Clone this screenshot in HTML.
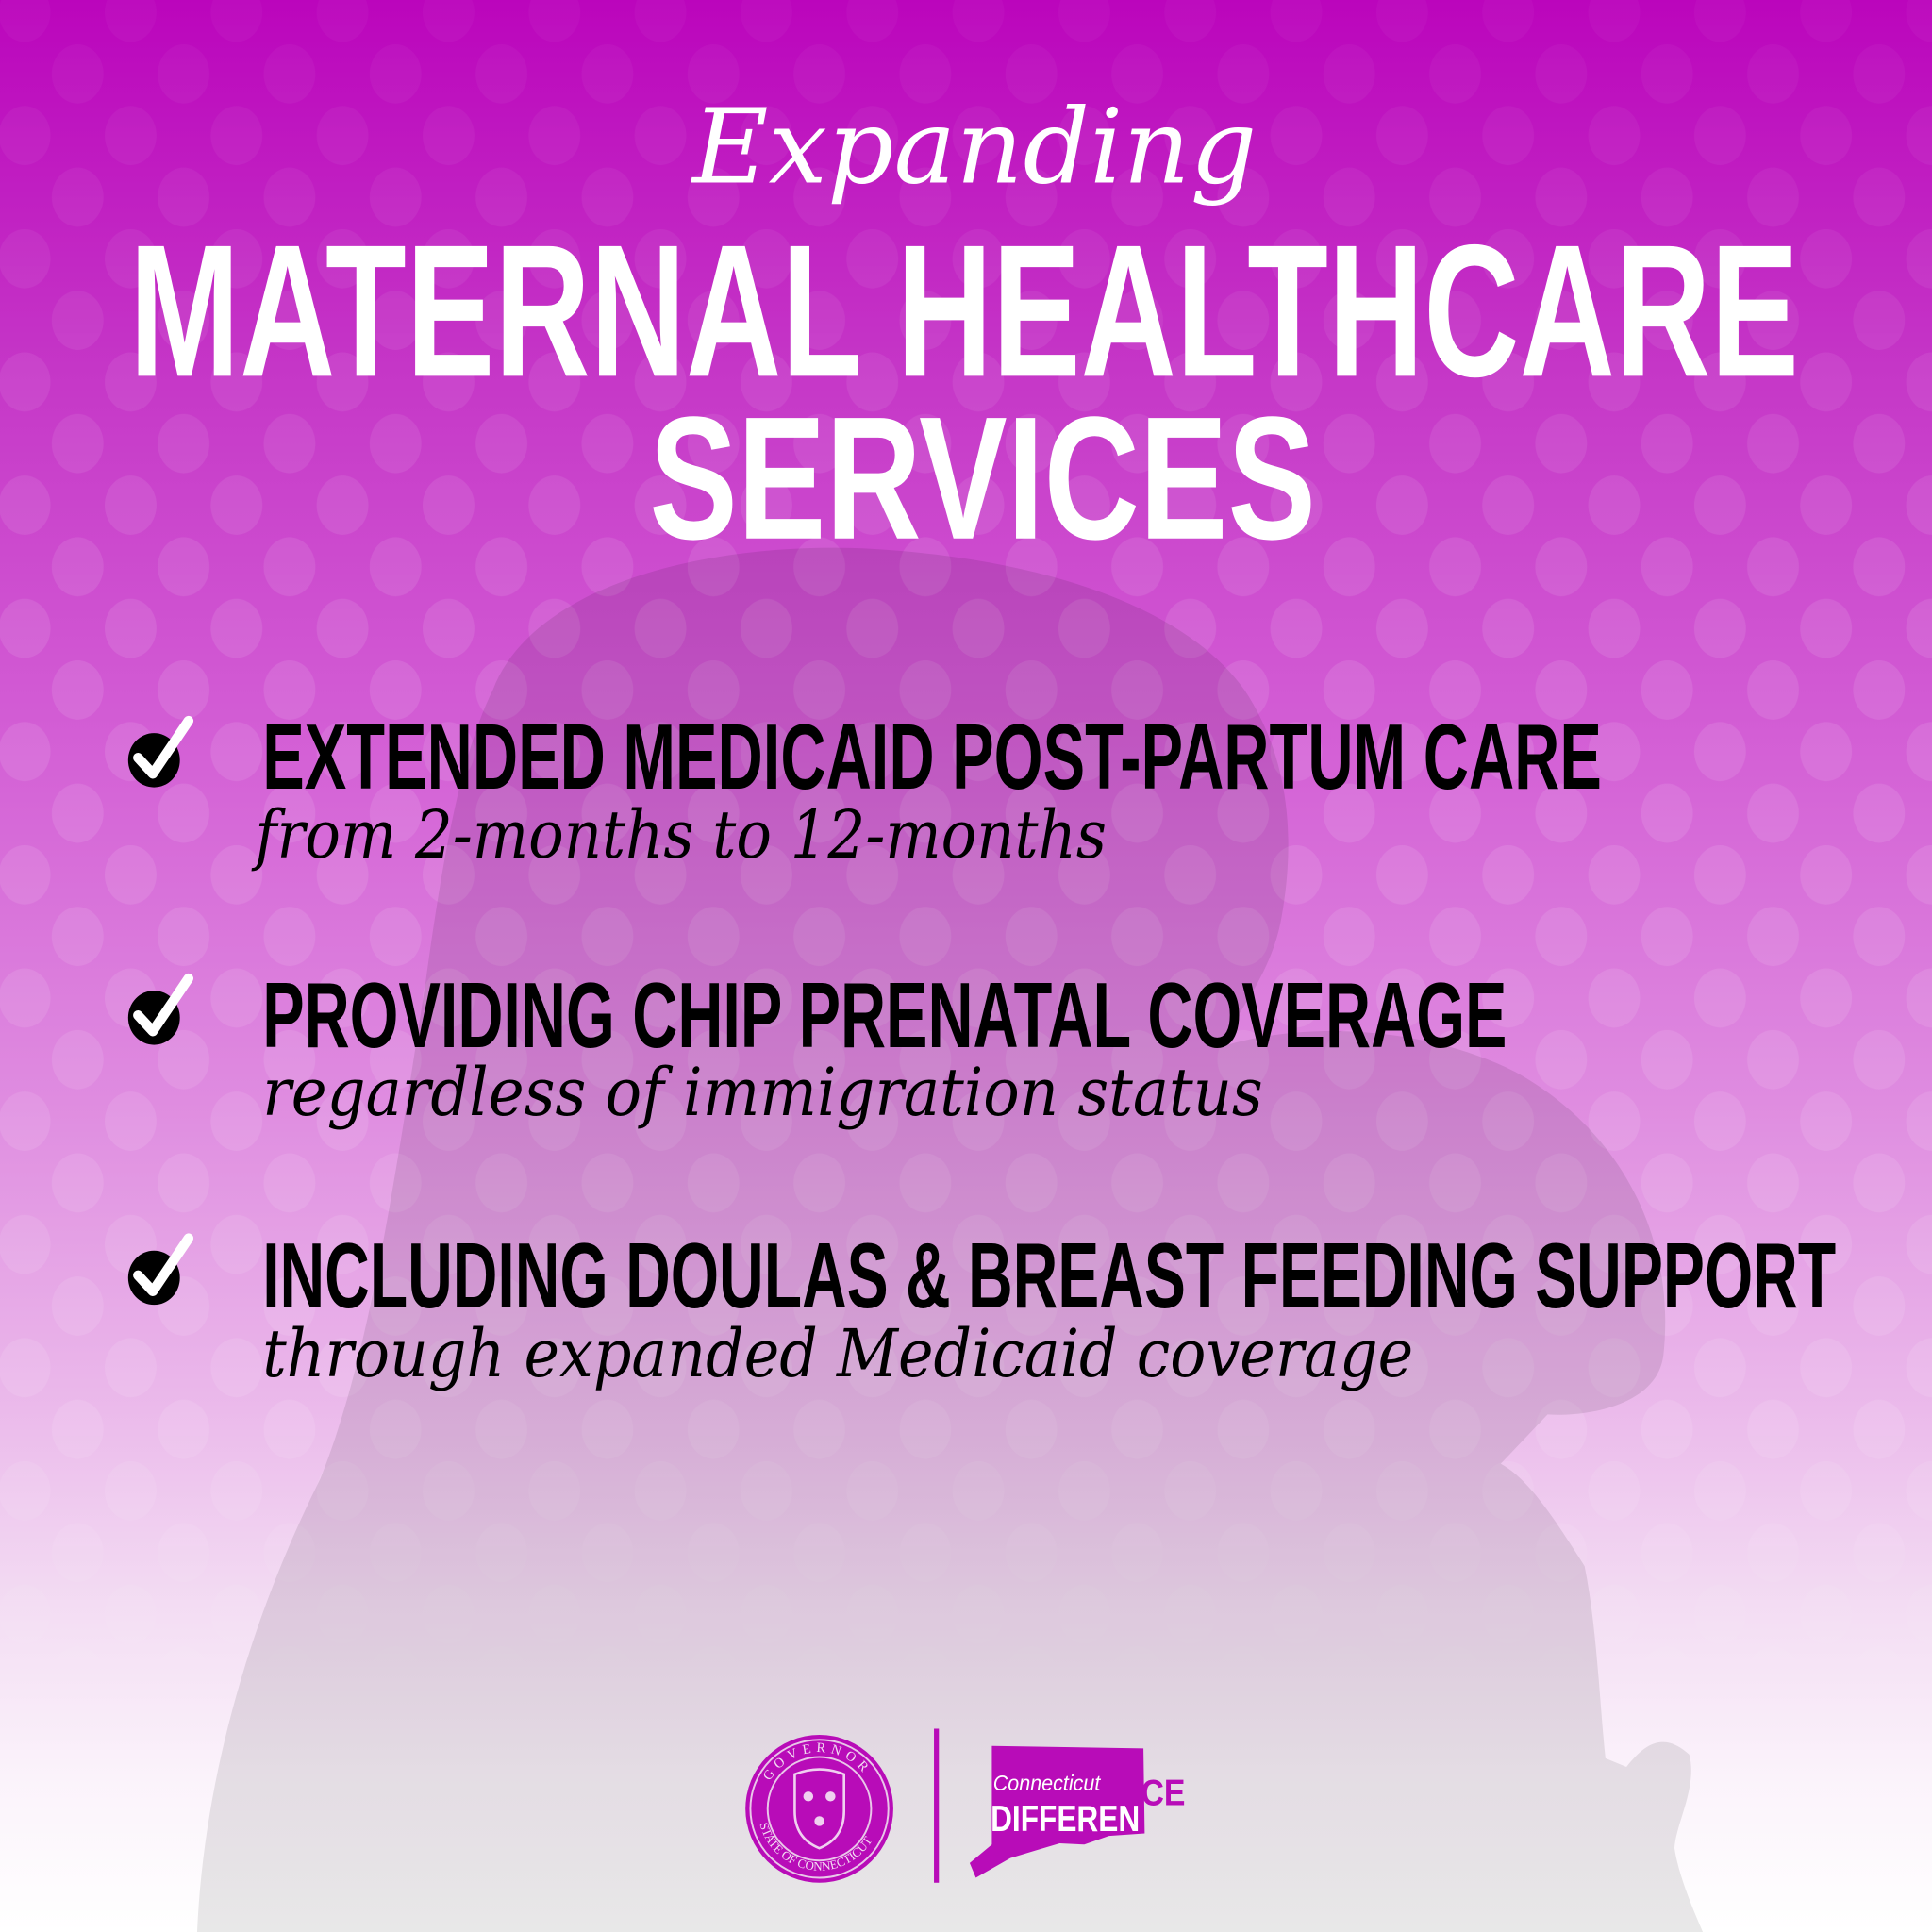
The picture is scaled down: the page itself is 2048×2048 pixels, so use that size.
<!DOCTYPE html>
<html><head><meta charset="utf-8"><style>
html,body{margin:0;padding:0;width:2048px;height:2048px;overflow:hidden;background:#fff}
svg{display:block}
.h{font-family:"Liberation Sans",sans-serif;font-weight:700}
.s{font-family:"DejaVu Serif","Liberation Serif",serif;font-style:italic}
</style></head><body>
<svg width="2048" height="2048" viewBox="0 0 1568 1568" xmlns="http://www.w3.org/2000/svg">
<defs>
<linearGradient id="bg" x1="0" y1="0" x2="0" y2="1">
<stop offset="0" stop-color="#bb05bc"/>
<stop offset="0.19" stop-color="#c536c7"/>
<stop offset="0.38" stop-color="#d35ed5"/>
<stop offset="0.57" stop-color="#df8ce0"/>
<stop offset="0.73" stop-color="#ebbaeb"/>
<stop offset="0.83" stop-color="#f3dcf3"/>
<stop offset="0.92" stop-color="#fbf3fb"/>
<stop offset="1" stop-color="#ffffff"/>
</linearGradient>
<pattern id="dots" x="20" y="10" width="86" height="100" patternUnits="userSpaceOnUse">
<ellipse cx="0" cy="0" rx="21" ry="24" fill="#fff" fill-opacity="0.1"/>
<ellipse cx="86" cy="0" rx="21" ry="24" fill="#fff" fill-opacity="0.1"/>
<ellipse cx="0" cy="100" rx="21" ry="24" fill="#fff" fill-opacity="0.1"/>
<ellipse cx="86" cy="100" rx="21" ry="24" fill="#fff" fill-opacity="0.1"/>
<ellipse cx="43" cy="50" rx="21" ry="24" fill="#fff" fill-opacity="0.1"/>
</pattern>
<linearGradient id="fade" x1="0" y1="0" x2="0" y2="1">
<stop offset="0" stop-color="#fff" stop-opacity="0.3"/>
<stop offset="0.35" stop-color="#fff" stop-opacity="1"/>
<stop offset="0.8" stop-color="#fff" stop-opacity="1"/>
<stop offset="1" stop-color="#fff" stop-opacity="0"/>
</linearGradient>
<mask id="m"><rect width="1568" height="1450" fill="url(#fade)"/></mask>
</defs>
<rect width="1568" height="1568" fill="url(#bg)"/>
<rect width="1568" height="1450" fill="url(#dots)" mask="url(#m)"/>
<path d="M400 560 C430 480 560 440 700 445 C840 452 960 490 1010 560 C1050 620 1050 690 1040 745 C1032 790 1005 820 990 850 C1050 830 1150 830 1230 870 C1320 920 1360 1010 1350 1100 C1345 1140 1290 1150 1256 1148 L1218 1188 C1240 1200 1260 1230 1286 1271 C1296 1320 1298 1380 1303 1427 L1320 1434 C1335 1415 1350 1405 1371 1424 C1378 1450 1360 1480 1359 1500 C1362 1520 1372 1545 1382 1568 L160 1568 C165 1450 200 1320 260 1200 C300 1100 320 960 345 800 C360 690 375 610 400 560 Z" fill="#000" fill-opacity="0.09"/>

<text class="s" x="562" y="148" font-size="84" fill="#fff" textLength="458" lengthAdjust="spacingAndGlyphs">Expanding</text>
<text class="h" x="105" y="305" font-size="153" fill="#fff" textLength="1355" lengthAdjust="spacingAndGlyphs">MATERNAL HEALTHCARE</text>
<text class="h" x="527" y="437" font-size="142" fill="#fff" textLength="541" lengthAdjust="spacingAndGlyphs">SERVICES</text>

<g id="c1">
<ellipse cx="125" cy="617" rx="21" ry="22" fill="#000"/>
<path d="M112 615 L124 628 L153 585" stroke="#fff" stroke-width="8" fill="none" stroke-linecap="round" stroke-linejoin="round"/>
</g>
<use href="#c1" y="209"/>
<use href="#c1" y="420"/>

<text class="h" x="213" y="640" font-size="75" fill="#000" textLength="1087" lengthAdjust="spacingAndGlyphs">EXTENDED MEDICAID POST-PARTUM CARE</text>
<text class="s" x="207" y="696" font-size="54" fill="#000" textLength="691" lengthAdjust="spacingAndGlyphs">from 2-months to 12-months</text>
<text class="h" x="213" y="850" font-size="75" fill="#000" textLength="1010" lengthAdjust="spacingAndGlyphs">PROVIDING CHIP PRENATAL COVERAGE</text>
<text class="s" x="213" y="905" font-size="54" fill="#000" textLength="812" lengthAdjust="spacingAndGlyphs">regardless of immigration status</text>
<text class="h" x="213" y="1061" font-size="75" fill="#000" textLength="1277" lengthAdjust="spacingAndGlyphs">INCLUDING DOULAS &amp; BREAST FEEDING SUPPORT</text>
<text class="s" x="213" y="1117" font-size="54" fill="#000" textLength="934" lengthAdjust="spacingAndGlyphs">through expanded Medicaid coverage</text>

<g>
<circle cx="665" cy="1468" r="60" fill="#b80cb8"/>
<circle cx="665" cy="1468" r="56" fill="none" stroke="#e9c7e9" stroke-width="1.5"/>
<circle cx="665" cy="1468" r="42" fill="none" stroke="#e9c7e9" stroke-width="1.5"/>
<path id="arcTop" d="M619 1468 A46 46 0 0 1 711 1468" fill="none"/>
<path id="arcBot" d="M615 1468 A50 50 0 0 0 715 1468" fill="none"/>
<text font-family="Liberation Serif,serif" font-size="11" fill="#f3dcf3" letter-spacing="4"><textPath href="#arcTop" startOffset="16%">GOVERNOR</textPath></text>
<text font-family="Liberation Serif,serif" font-size="10" fill="#f3dcf3"><textPath href="#arcBot" startOffset="8%">STATE OF CONNECTICUT</textPath></text>
<path d="M645 1440 Q665 1432 685 1440 L685 1470 Q685 1492 665 1500 Q645 1492 645 1470 Z" fill="none" stroke="#f0d0f0" stroke-width="2"/>
<circle cx="656" cy="1458" r="4" fill="#f0d0f0"/><circle cx="674" cy="1458" r="4" fill="#f0d0f0"/><circle cx="665" cy="1478" r="4" fill="#f0d0f0"/>
</g>
<rect x="758" y="1403" width="4" height="125" fill="#b80cb8"/>
<polygon points="805,1417 928,1419 929,1488 900,1490 880,1497 860,1496 840,1502 820,1508 792,1524 787,1512 805,1497" fill="#b80cb8"/>
<text x="806" y="1453" font-family="Liberation Sans,sans-serif" font-style="italic" font-size="18" fill="#fff" textLength="87" lengthAdjust="spacingAndGlyphs">Connecticut</text>
<text x="804" y="1486" class="h" font-size="30" fill="#fff" textLength="121" lengthAdjust="spacingAndGlyphs">DIFFEREN</text>
<text x="926" y="1465" class="h" font-size="30" fill="#b80cb8" textLength="36" lengthAdjust="spacingAndGlyphs">CE</text>
</svg>
</body></html>
